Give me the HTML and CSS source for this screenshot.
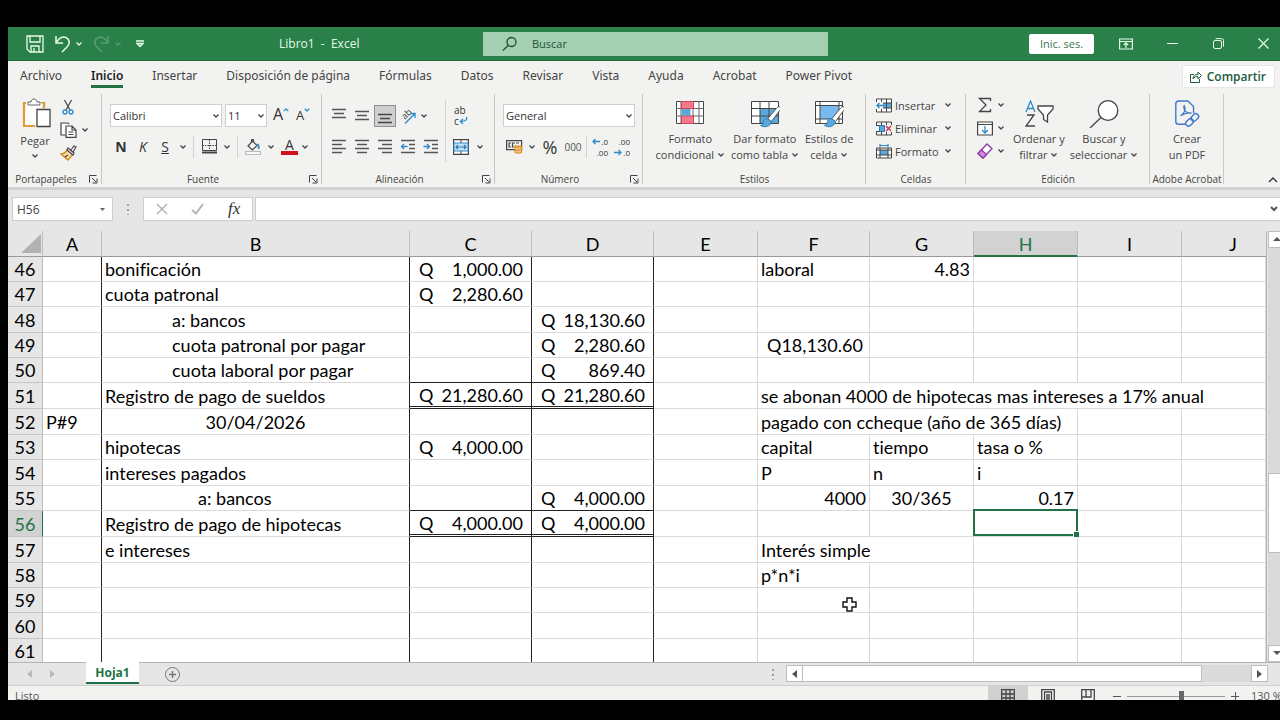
FILE: index.html
```html
<!DOCTYPE html>
<html lang="es">
<head>
<meta charset="utf-8">
<title>Libro1 - Excel</title>
<link rel="stylesheet" href="styles.css">
</head>
<body>
<svg class="defs" aria-hidden="true">
  <symbol id="chev" viewBox="0 0 8 8"><path d="M1.500 2.500 4 5l2.500-2.500" fill="none" stroke="currentColor" stroke-width="1.300"/></symbol>
  <symbol id="launch" viewBox="0 0 9 9"><path d="M.5 7.500v-7h7M3 3l4 4M8 3.500V8H3.500" fill="none" stroke="currentColor"/></symbol>
  <symbol id="brush" viewBox="0 0 24 24"><path d="M22 1c2 1 1 3 0 4l-9 12-4-3 9-11c1-1 2.500-3 4-2z" fill="#fff" stroke="#444"/><path d="M9 14c-4-1-5 3-5 5 0 2-2 2-3 2 4 3 11 2 12-4z" fill="#5ba9dc" stroke="#2878b5"/></symbol>
</svg>
<div class="app">
  <header class="titlebar">
    <div class="quick">
      <button aria-label="Guardar"><svg width="18" height="18" viewBox="0 0 18 18" fill="none" stroke="currentColor" stroke-width="1.300"><path d="M1 1h16v16H4l-3-3zM4 1v6h10V1M5 17v-6h8v6M8 13v4"/></svg></button>
      <button aria-label="Deshacer"><svg width="18" height="18" viewBox="0 0 18 18" fill="none" stroke="currentColor" stroke-width="1.500"><path d="M2 1v7h7M2 8C6 1 11 1 14 4c2 3 1 6-1 8l-5 5"/></svg><svg width="8" height="8"><use href="#chev"/></svg></button>
      <button class="dim" aria-label="Rehacer"><svg width="18" height="18" viewBox="0 0 18 18" fill="none" stroke="currentColor" stroke-width="1.500"><path d="M15 1v7H8M15 8C11 1 6 1 3 4c-2 3-1 6 1 8l5 5"/></svg><svg width="8" height="8"><use href="#chev"/></svg></button>
      <button aria-label="Personalizar"><svg width="8" height="8" viewBox="0 0 8 8" fill="none" stroke="currentColor" stroke-width="1.300"><path d="M0 1h8M1 3.500h6L4 6.500z"/></svg></button>
    </div>
    <h1 class="doc">Libro1&nbsp; -&nbsp; Excel</h1>
    <label class="search"><svg width="16" height="16" viewBox="0 0 16 16" fill="none" stroke="#1c5536" stroke-width="1.300"><circle cx="9.500" cy="6" r="4.500"/><path d="M6.300 9.200 1 14.500"/></svg><input type="text" placeholder="Buscar" aria-label="Buscar"></label>
    <div class="window">
      <button class="signin">Inic. ses.</button>
      <button aria-label="Opciones de cinta"><svg width="14" height="12" viewBox="0 0 14 12" fill="none" stroke="currentColor" stroke-width="1.200"><path d="M.6 1h12.800v10H.6zM.6 3.500h12.800M7 10V5M4.800 7 7 4.800 9.200 7"/></svg></button>
      <button aria-label="Minimizar"><svg width="11" height="11" viewBox="0 0 11 11" stroke="currentColor"><path d="M0 5.500h11"/></svg></button>
      <button aria-label="Restaurar"><svg width="11" height="11" viewBox="0 0 11 11" fill="none" stroke="currentColor"><rect x=".5" y="2.500" width="8" height="8" rx="1.500"/><path d="M2.500.6h6q2 0 2 2v6"/></svg></button>
      <button aria-label="Cerrar"><svg width="11" height="11" viewBox="0 0 11 11" stroke="currentColor" stroke-width="1.200"><path d="M.5.5l10 10M10.500.5l-10 10"/></svg></button>
    </div>
  </header>

  <nav class="tabs">
    <a href="#">Archivo</a><a href="#" class="active">Inicio</a><a href="#">Insertar</a><a href="#">Disposición de página</a><a href="#">Fórmulas</a><a href="#">Datos</a><a href="#">Revisar</a><a href="#">Vista</a><a href="#">Ayuda</a><a href="#">Acrobat</a><a href="#">Power Pivot</a>
    <button class="share"><svg width="12" height="12" viewBox="0 0 12 12" fill="none" stroke="currentColor"><path d="M4 3.500H.5v8h9V8M3 8c0-3 2-4.500 5-4.500V1l3.500 3.500L8 8V5.500C6 5.500 4 6 3 8z"/></svg>Compartir</button>
  </nav>

  <section class="ribbon">
    <div class="group g-clip">
      <div class="gbody">
        <button class="big paste"><svg width="32" height="32" viewBox="-3 0 32 32" fill="none"><path d="M4 5H2v23h11M19 5h3v5" stroke="#e29a37" stroke-width="2.200"/><path d="M4 5h16v5h-6v17H3z" fill="#fff"/><path d="M6 7V4h3c0-4 6-4 6 0h3v3z" fill="#fff" stroke="#666"/><path d="M15 11.500h13v17H15z" fill="#fff" stroke="#444" stroke-width="1.300"/></svg><span>Pegar</span><svg width="8" height="8"><use href="#chev"/></svg></button>
        <div class="stack">
          <button aria-label="Cortar"><svg width="16" height="16" viewBox="0 0 16 16" fill="none"><path d="M4.500 1l5.500 10M11.500 1 6 11" stroke="#444" stroke-width="1.200"/><circle cx="5" cy="13" r="2" stroke="#2e8bcb" stroke-width="1.300"/><circle cx="11" cy="13" r="2" stroke="#2e8bcb" stroke-width="1.300"/></svg></button>
          <button aria-label="Copiar"><svg width="17" height="16" viewBox="0 0 17 16" fill="#fff" stroke="#444" stroke-width="1.200"><path d="M6 13H1V1h7l1 1"/><path d="M6 4h6l4 4v7.400H6zM12 4v4h4M8.500 10h5M8.500 12.500h5"/></svg><svg width="8" height="8"><use href="#chev"/></svg></button>
          <button aria-label="Copiar formato"><svg width="17" height="16" viewBox="0 0 17 16"><path d="M8 4l5 5-5 6-7-6c3 0 5-2 7-5z" fill="#f8dca8" stroke="#d98a1f" stroke-width="1.400"/><path d="M5 12l3-2M7 5l6 5 1-2-6-5zM11 5l3-4 2 1-3 5" fill="#fff" stroke="#444" stroke-width="1.200"/></svg></button>
        </div>
      </div>
      <footer><span>Portapapeles</span><button aria-label="Más opciones de portapapeles"><svg width="9" height="9"><use href="#launch"/></svg></button></footer>
    </div>

    <div class="group g-font">
      <div class="gbody col">
        <div class="row">
          <span class="combo w-font"><select aria-label="Fuente"><option>Calibri</option></select><svg width="8" height="8"><use href="#chev"/></svg></span>
          <span class="combo w-size"><select aria-label="Tamaño"><option>11</option></select><svg width="8" height="8"><use href="#chev"/></svg></span>
          <button class="ic grow-a" aria-label="Aumentar fuente"><span class="a-lg">A</span><svg width="6" height="14" viewBox="0 0 6 14" fill="none" stroke="#2e8bcb" stroke-width="1.300"><path d="M.8 6 3 3.800 5.200 6"/></svg></button>
          <button class="ic grow-a" aria-label="Disminuir fuente"><span class="a-sm">A</span><svg width="6" height="14" viewBox="0 0 6 14" fill="none" stroke="#2e8bcb" stroke-width="1.300"><path d="M.8 3.800 3 6 5.200 3.800"/></svg></button>
        </div>
        <div class="row">
          <button class="ic"><b>N</b></button><button class="ic"><i>K</i></button><button class="ic"><u>S</u></button><button class="dd" aria-label="Subrayado"><svg width="8" height="8"><use href="#chev"/></svg></button>
          <span class="vr"></span>
          <button class="ic" aria-label="Bordes"><svg width="15" height="15" viewBox="0 0 15 15" fill="none" stroke="#444"><path d="M.5 6.500h14M7.500 1v11" stroke-dasharray="1.500 1"/><path d="M0 13.500h15" stroke-width="2"/><path d="M.5 .5h14v11H.5z"/></svg></button><button class="dd" aria-label="Tipos de borde"><svg width="8" height="8"><use href="#chev"/></svg></button>
          <span class="vr"></span>
          <button class="ic" aria-label="Relleno"><svg width="16" height="16" viewBox="0 0 16 16" fill="none" stroke="#444" stroke-width="1.200"><path d="M6.500 4V1q1.500-1.500 2 0v3M7.500 2 12 6.500 7.500 11 3 7z"/><path d="M12 5c2 1 2 3 1.500 5" stroke="#2e8bcb" stroke-width="1.800"/><rect x=".5" y="12.500" width="15" height="3" fill="#fff" stroke="#bbb"/></svg></button><button class="dd" aria-label="Colores de relleno"><svg width="8" height="8"><use href="#chev"/></svg></button>
          <button class="ic fontcolor" aria-label="Color de fuente">A</button><button class="dd" aria-label="Colores de fuente"><svg width="8" height="8"><use href="#chev"/></svg></button>
        </div>
      </div>
      <footer><span>Fuente</span><button aria-label="Más opciones de fuente"><svg width="9" height="9"><use href="#launch"/></svg></button></footer>
    </div>

    <div class="group g-align">
      <div class="gbody">
        <div class="col">
          <div class="row">
            <button class="ic" aria-label="Arriba"><svg width="16" height="16" viewBox="0 0 16 16" stroke="#555" stroke-width="1.300"><path d="M1 1.500h14M3 5.500h10M1 9.500h14"/></svg></button>
            <button class="ic" aria-label="Medio"><svg width="16" height="16" viewBox="0 0 16 16" stroke="#555" stroke-width="1.300"><path d="M1 3.500h14M3 7.500h10M1 11.500h14"/></svg></button>
            <button class="ic on" aria-label="Abajo"><svg width="16" height="16" viewBox="0 0 16 16" stroke="#444" stroke-width="1.300"><path d="M1 6.500h14M3 10.500h10M1 14.500h14"/></svg></button>
            <button class="ic" aria-label="Orientación"><svg width="22" height="22" viewBox="0 0 22 22" fill="none"><text x="8" y="15" transform="rotate(-45 8 15)" font-size="9" fill="#444">ab</text><path d="M8 18.500 18 8.500M13.500 8.500H18V13" stroke="#2e8bcb" stroke-width="1.300"/></svg></button>
            <button class="dd tight" aria-label="Ángulos"><svg width="8" height="8"><use href="#chev"/></svg></button>
          </div>
          <div class="row">
            <button class="ic" aria-label="Izquierda"><svg width="16" height="16" viewBox="0 0 16 16" stroke="#555" stroke-width="1.300"><path d="M1 1.500h14M1 5.500h10M1 9.500h14M1 13.500h10"/></svg></button>
            <button class="ic" aria-label="Centro"><svg width="16" height="16" viewBox="0 0 16 16" stroke="#555" stroke-width="1.300"><path d="M1 1.500h14M3 5.500h10M1 9.500h14M3 13.500h10"/></svg></button>
            <button class="ic" aria-label="Derecha"><svg width="16" height="16" viewBox="0 0 16 16" stroke="#555" stroke-width="1.300"><path d="M1 1.500h14M5 5.500h10M1 9.500h14M5 13.500h10"/></svg></button>
            <button class="ic" aria-label="Disminuir sangría"><svg width="16" height="16" viewBox="0 0 16 16" fill="none" stroke="#555" stroke-width="1.300"><path d="M1 1.500h14M9 5.500h6M9 9.500h6M1 13.500h14"/><path d="M7.500 7.500H1.500M4 5 1.500 7.500 4 10" stroke="#2e8bcb"/></svg></button>
            <button class="ic" aria-label="Aumentar sangría"><svg width="16" height="16" viewBox="0 0 16 16" fill="none" stroke="#555" stroke-width="1.300"><path d="M1 1.500h14M9 5.500h6M9 9.500h6M1 13.500h14"/><path d="M.5 7.500h6M4 5l2.500 2.500L4 10" stroke="#2e8bcb"/></svg></button>
          </div>
        </div>
        <span class="vr tall"></span>
        <div class="col">
          <div class="row"><button class="ic wrap" aria-label="Ajustar texto"><span>ab</span><span>c<svg width="9" height="8" viewBox="0 0 9 8" fill="none" stroke="#2e8bcb" stroke-width="1.300"><path d="M7.500 0c1 3.500-2 4.500-6 4.500M4 2 1.300 4.500 4 7"/></svg></span></button></div>
          <div class="row"><button class="ic" aria-label="Combinar"><svg width="16" height="16" viewBox="0 0 16 16" fill="none"><path d="M.6.600h14.800v14.800H.6z" fill="#fff" stroke="#444" stroke-width="1.200"/><path d="M1 4h14v8H1z" fill="#c5e3f5" stroke="#2e8bcb"/><path d="M8 1v3M8 12v3" stroke="#444"/><path d="M3 8h10M5 6 3 8l2 2M11 6l2 2-2 2" stroke="#2878b5" stroke-width="1.200"/></svg></button><button class="dd" aria-label="Opciones de combinar"><svg width="8" height="8"><use href="#chev"/></svg></button></div>
        </div>
      </div>
      <footer><span>Alineación</span><button aria-label="Más opciones de alineación"><svg width="9" height="9"><use href="#launch"/></svg></button></footer>
    </div>

    <div class="group g-num">
      <div class="gbody col">
        <div class="row"><span class="combo w-num"><select aria-label="Formato de número"><option>General</option></select><svg width="8" height="8"><use href="#chev"/></svg></span></div>
        <div class="row">
          <button class="ic" aria-label="Moneda"><svg width="17" height="15" viewBox="0 0 17 15" fill="none" stroke="#444" stroke-width="1.200"><path d="M.6 1.600h15v9H.6z"/><path d="M5 4H3v4h2M9 4H6.500v4H8M10 4h3"/><path d="M9 7v6c0 1.500 6.500 1.500 6.500 0V7z" fill="#f6c78a" stroke="#dd8a20"/><path d="M9 7c0 1.500 6.500 1.500 6.500 0M9 10c0 1.500 6.500 1.500 6.500 0" stroke="#dd8a20"/></svg></button><button class="dd" aria-label="Monedas"><svg width="8" height="8"><use href="#chev"/></svg></button>
          <button class="ic pct">%</button><button class="ic zeros">000</button>
          <span class="vr"></span>
          <button class="ic dec" aria-label="Aumentar decimales"><span><svg width="8" height="7" viewBox="0 0 8 7" fill="none" stroke="#2e8bcb" stroke-width="1.300"><path d="M8 3.500H1M3.500 1 1 3.500 3.500 6"/></svg>.0</span><span>.00</span></button>
          <button class="ic dec" aria-label="Disminuir decimales"><span>.00</span><span><svg width="8" height="7" viewBox="0 0 8 7" fill="none" stroke="#2e8bcb" stroke-width="1.300"><path d="M0 3.500h7M4.500 1 7 3.500 4.500 6"/></svg>.0</span></button>
        </div>
      </div>
      <footer><span>Número</span><button aria-label="Más opciones de número"><svg width="9" height="9"><use href="#launch"/></svg></button></footer>
    </div>

    <div class="group g-styles">
      <div class="gbody">
        <button class="big"><svg width="30" height="28" viewBox="0 0 30 28" fill="none"><path d="M1.500 1.500h27v22h-27z" fill="#fff" stroke="#444"/><path d="M6 1v22M24 1v22M1 8.500h28M1 16h28M12 1v22M18 1v22" stroke="#666"/><path d="M6.500 1.500h12v7h-12zM6.500 16h12v7.500h-12z" fill="#f47a8a" stroke="#d3455a"/><path d="M6.500 9h9v6.500h-9z" fill="#5ba9dc"/></svg><span>Formato<br>condicional <svg width="8" height="8"><use href="#chev"/></svg></span></button>
        <button class="big"><svg width="30" height="28" viewBox="0 0 30 28" fill="none"><path d="M1.500 1.500h27v22h-27z" fill="#fff" stroke="#444"/><path d="M10 9h18v14H10z" fill="#5ba9dc"/><path d="M10 1v22M19 1v22M1 8.500h28M1 16h28" stroke="#444"/><use href="#brush" x="9" y="6" width="23" height="22"/></svg><span>Dar formato<br>como tabla <svg width="8" height="8"><use href="#chev"/></svg></span></button>
        <button class="big"><svg width="30" height="28" viewBox="0 0 30 28" fill="none"><path d="M1.500 1.500h27v22h-27z" fill="#fff" stroke="#444"/><path d="M6 6h19v13H6z" fill="#78baf0"/><path d="M6 1v22M25 1v22M1 5.500h28M1 19h28" stroke="#444"/><use href="#brush" x="9" y="6" width="23" height="22"/></svg><span>Estilos de<br>celda <svg width="8" height="8"><use href="#chev"/></svg></span></button>
      </div>
      <footer><span>Estilos</span></footer>
    </div>

    <div class="group g-cells">
      <div class="gbody stack">
        <button><svg width="16" height="15" viewBox="0 0 16 15" fill="none"><path d="M.5 1h15v13H.5z" fill="#fff" stroke="#444"/><path d="M6 5h9v5H6z" fill="#5ba9dc"/><path d="M.5 5h15M.5 10h15M5.500 1v13M10.500 1v13" stroke="#444"/><path d="M0 4h7v7H0z" fill="#f3f3f1"/><path d="M8 7.500H1M3.500 5 1 7.500 3.500 10" stroke="#2e8bcb" stroke-width="1.300"/></svg><span>Insertar</span><svg width="8" height="8"><use href="#chev"/></svg></button>
        <button><svg width="16" height="15" viewBox="0 0 16 15" fill="none"><path d="M.5 4V1h15v3M.5 11v3h15v-3M5.500 1v3M10.500 1v3M5.500 11v3M10.500 11v3M0 4.500h5M0 10.500h5" stroke="#444"/><path d="M3.500 4.500h5v6h-5z" fill="#5ba9dc" stroke="#2878b5"/><path d="M10 5l5 5M15 5l-5 5" stroke="#d3304a" stroke-width="1.400"/></svg><span>Eliminar</span><svg width="8" height="8"><use href="#chev"/></svg></button>
        <button><svg width="16" height="16" viewBox="0 0 16 16" fill="none"><path d="M4 1v3M12 1v3M4 2.500h8" stroke="#2e8bcb" stroke-width="1.200"/><path d="M.5 5h15v10H.5z" fill="#fff" stroke="#444"/><path d="M4 7h8v5H4z" fill="#5ba9dc"/><path d="M4 5v10M12 5v10M0 7h16M0 12h16" stroke="#444"/></svg><span>Formato</span><svg width="8" height="8"><use href="#chev"/></svg></button>
      </div>
      <footer><span>Celdas</span></footer>
    </div>

    <div class="group g-edit">
      <div class="gbody">
        <div class="stack">
          <button aria-label="Autosuma"><svg width="16" height="16" viewBox="0 0 16 16" fill="none" stroke="#444" stroke-width="1.300"><path d="M13.500 4V1.500h-11L9 8l-6.500 6.500h11V12"/></svg><svg width="8" height="8"><use href="#chev"/></svg></button>
          <button aria-label="Rellenar"><svg width="16" height="15" viewBox="0 0 16 15" fill="none"><path d="M.6 1h14.800v13H.6zM.6 3.500h14.800" fill="#fff" stroke="#444" stroke-width="1.200"/><path d="M8 5v7M5 9l3 3 3-3" stroke="#2e8bcb" stroke-width="1.300"/></svg><svg width="8" height="8"><use href="#chev"/></svg></button>
          <button aria-label="Borrar"><svg width="16" height="16" viewBox="0 0 16 16" stroke="#8e3aa5" stroke-width="1.300"><path d="M1 10.500 10 1l5 4.500L6 15z" fill="#fff"/><path d="M1 10.500 4.500 7l5 4.500L6 15z" fill="#d58be0"/></svg><svg width="8" height="8"><use href="#chev"/></svg></button>
        </div>
        <button class="big"><svg width="30" height="28" viewBox="0 0 30 28" fill="none" stroke-width="1.300"><path d="M2 12 6.500 1 11 12M3.500 8.500h6" stroke="#2e8bcb"/><path d="M3 15h7l-8 11h9" stroke="#444"/><path d="M14 6h15v3l-5.500 6v7l-4-2.500V15L14 9z" fill="#fff" stroke="#444"/></svg><span>Ordenar y<br>filtrar <svg width="8" height="8"><use href="#chev"/></svg></span></button>
        <button class="big"><svg width="30" height="28" viewBox="0 0 30 28" fill="none" stroke="#444" stroke-width="1.300"><circle cx="19" cy="10.500" r="9.800" fill="#fff"/><path d="M12 17.500 1 28"/></svg><span>Buscar y<br>seleccionar <svg width="8" height="8"><use href="#chev"/></svg></span></button>
      </div>
      <footer><span>Edición</span></footer>
    </div>

    <div class="group g-pdf">
      <div class="gbody">
        <button class="big"><svg width="28" height="28" viewBox="0 0 28 30" fill="none" stroke="#3e78cc" stroke-width="1.500"><path d="M12 26H5q-3 0-3-3V4q0-3 3-3h10l6 6v7"/><path d="M7 17c5-3 6-8 4-11-2 4 3 9 8 8-5-1-9 1-12 3z" stroke-width="1.200"/><rect x="18" y="16" width="9" height="6" rx="3" transform="rotate(-45 22 19)"/><rect x="12" y="21.500" width="9" height="6" rx="3" transform="rotate(-45 16 24)"/></svg><span>Crear<br>un PDF</span></button>
      </div>
      <footer><span>Adobe Acrobat</span></footer>
    </div>
    <button class="collapse" aria-label="Contraer cinta"><svg width="10" height="6" viewBox="0 0 10 6" fill="none" stroke="#333" stroke-width="1.300"><path d="M1 5l4-4 4 4"/></svg></button>
  </section>

  <section class="formula">
    <label class="namebox"><input type="text" value="H56" aria-label="Cuadro de nombres"><svg width="5" height="3"><path d="M0 0h5L2.500 3z" fill="#666"/></svg></label>
    <span class="grip"></span>
    <div class="fx">
      <button aria-label="Cancelar"><svg width="12" height="12" viewBox="0 0 12 12" stroke="#b4b4b4" stroke-width="1.500"><path d="M1 1l10 10M11 1 1 11"/></svg></button>
      <button aria-label="Introducir"><svg width="13" height="12" viewBox="0 0 13 12" fill="none" stroke="#b4b4b4" stroke-width="2"><path d="M1 7l4 3.500L12 1"/></svg></button>
      <button class="fn">fx</button>
    </div>
    <label class="fbar"><input type="text" aria-label="Barra de fórmulas"><svg width="8" height="6" viewBox="0 0 8 6" fill="none" stroke="#555" stroke-width="2"><path d="M1 1l3 3 3-3"/></svg></label>
  </section>

  <main class="sheet">
    <div class="gridwrap">
    <table class="grid">
      <colgroup><col class="c-row"><col class="c-a"><col class="c-b"><col class="c-c"><col class="c-c"><col class="c-e"><col class="c-f"><col class="c-e"><col class="c-e"><col class="c-e"><col></colgroup>
      <thead><tr class="t"><th class="corner"><svg width="20" height="19"><path d="M20 0v19H0z" fill="#b2b2b2"/></svg></th><th>A</th><th>B</th><th>C</th><th>D</th><th>E</th><th>F</th><th>G</th><th class="sel">H</th><th>I</th><th class="last">J</th></tr></thead>
      <tbody>
        <tr><th>46</th><td class="k"></td><td class="k">bonificación</td><td class="k"><div class="acc"><span>Q</span><span>1,000.00</span></div></td><td class="k"></td><td></td><td>laboral</td><td class="r">4.83</td><td></td><td></td><td></td></tr>
        <tr><th>47</th><td class="k"></td><td class="k">cuota patronal</td><td class="k"><div class="acc"><span>Q</span><span>2,280.60</span></div></td><td class="k"></td><td></td><td></td><td></td><td></td><td></td><td></td></tr>
        <tr class="t"><th>48</th><td class="k"></td><td class="k in1">a: bancos</td><td class="k"></td><td class="k"><div class="acc"><span>Q</span><span>18,130.60</span></div></td><td></td><td></td><td></td><td></td><td></td><td></td></tr>
        <tr><th>49</th><td class="k"></td><td class="k in1">cuota patronal por pagar</td><td class="k"></td><td class="k"><div class="acc"><span>Q</span><span>2,280.60</span></div></td><td></td><td class="cur">Q18,130.60</td><td></td><td></td><td></td><td></td></tr>
        <tr><th>50</th><td class="k"></td><td class="k in1">cuota laboral por pagar</td><td class="k bb"></td><td class="k bb"><div class="acc"><span>Q</span><span>869.40</span></div></td><td></td><td></td><td></td><td></td><td></td><td></td></tr>
        <tr class="t"><th>51</th><td class="k"></td><td class="k">Registro de pago de sueldos</td><td class="k dbl"><div class="acc"><span>Q</span><span>21,280.60</span></div></td><td class="k dbl"><div class="acc"><span>Q</span><span>21,280.60</span></div></td><td></td><td colspan="5">se abonan 4000 de hipotecas mas intereses a 17% anual</td></tr>
        <tr class="t"><th>52</th><td class="k">P#9</td><td class="k c">30/04/2026</td><td class="k"></td><td class="k"></td><td></td><td colspan="3">pagado con ccheque (año de 365 días)</td><td></td><td></td></tr>
        <tr><th>53</th><td class="k"></td><td class="k">hipotecas</td><td class="k"><div class="acc"><span>Q</span><span>4,000.00</span></div></td><td class="k"></td><td></td><td>capital</td><td>tiempo</td><td>tasa o %</td><td></td><td></td></tr>
        <tr class="t"><th>54</th><td class="k"></td><td class="k">intereses pagados</td><td class="k"></td><td class="k"></td><td></td><td>P</td><td>n</td><td>i</td><td></td><td></td></tr>
        <tr><th>55</th><td class="k"></td><td class="k in2">a: bancos</td><td class="k bb"></td><td class="k bb"><div class="acc"><span>Q</span><span>4,000.00</span></div></td><td></td><td class="r">4000</td><td class="c">30/365</td><td class="r">0.17</td><td></td><td></td></tr>
        <tr class="t"><th class="rowsel">56</th><td class="k"></td><td class="k">Registro de pago de hipotecas</td><td class="k dbl"><div class="acc"><span>Q</span><span>4,000.00</span></div></td><td class="k dbl"><div class="acc"><span>Q</span><span>4,000.00</span></div></td><td></td><td></td><td></td><td class="active-cell"></td><td></td><td></td></tr>
        <tr class="t"><th>57</th><td class="k"></td><td class="k">e intereses</td><td class="k"></td><td class="k"></td><td></td><td colspan="2">Interés simple</td><td></td><td></td><td></td></tr>
        <tr><th>58</th><td class="k"></td><td class="k"></td><td class="k"></td><td class="k"></td><td></td><td>p*n*i</td><td></td><td></td><td></td><td></td></tr>
        <tr><th>59</th><td class="k"></td><td class="k"></td><td class="k"></td><td class="k"></td><td></td><td class="host"><svg class="cursor" width="15" height="15" viewBox="0 0 15 15" fill="#fff" stroke="#111" stroke-width="1.400"><path d="M5 1h5v4h4v5h-4v4H5v-4H1V5h4z"/></svg></td><td></td><td></td><td></td><td></td></tr>
        <tr class="t"><th>60</th><td class="k"></td><td class="k"></td><td class="k"></td><td class="k"></td><td></td><td></td><td></td><td></td><td></td><td></td></tr>
        <tr><th>61</th><td class="k"></td><td class="k"></td><td class="k"></td><td class="k"></td><td></td><td></td><td></td><td></td><td></td><td></td></tr>
      </tbody>
    </table>
    </div>
    <div class="vscroll">
      <button aria-label="Subir"><svg width="8" height="5"><path d="M0 4h8L4 0z" fill="#555"/></svg></button>
      <div class="track"><div class="thumb"></div></div>
      <button aria-label="Bajar"><svg width="8" height="5"><path d="M0 0h8L4 4z" fill="#555"/></svg></button>
    </div>
  </main>

  <div class="sheettabs">
    <div class="arrows"><svg width="5" height="8"><path d="M5 0v8L0 4z" fill="#b8b8b8"/></svg><svg width="5" height="8"><path d="M0 0v8l5-4z" fill="#b8b8b8"/></svg></div>
    <a href="#" class="tab">Hoja1</a>
    <button class="add" aria-label="Hoja nueva"><svg width="15" height="15" viewBox="0 0 15 15" fill="none" stroke="#777"><circle cx="7.500" cy="7.500" r="7"/><path d="M4 7.500h7M7.500 4v7" stroke-width="1.400"/></svg></button>
    <span class="grip"></span>
    <div class="hscroll">
      <button aria-label="Izquierda"><svg width="5" height="8"><path d="M5 0v8L0 4z" fill="#555"/></svg></button>
      <div class="track"><div class="thumb"></div></div>
      <button aria-label="Derecha"><svg width="5" height="8"><path d="M0 0v8l5-4z" fill="#555"/></svg></button>
    </div>
  </div>

  <footer class="status">
    <span>Listo</span>
    <div class="views">
      <button class="on" aria-label="Normal"><svg width="14" height="14" viewBox="0 0 14 14" fill="none" stroke="#444" stroke-width="1.300"><path d="M.7.700h12.600v12.600H.7zM5 1v12M9 1v12M1 5h12M1 9h12"/></svg></button>
      <button aria-label="Diseño de página"><svg width="14" height="14" viewBox="0 0 14 14" fill="none" stroke="#444" stroke-width="1.300"><path d="M.7.700h12.600v12.600H.7zM3.500 3h7v11h-7zM5 6h4M5 8h4M5 10h4"/></svg></button>
      <button aria-label="Saltos de página"><svg width="14" height="14" viewBox="0 0 14 14" fill="none" stroke="#444" stroke-width="1.300"><path d="M.7.700h12.600v12.600H.7zM5 1v7h5V1M.7 8H5"/></svg></button>
    </div>
    <div class="zoom"><button aria-label="Alejar"><svg width="8" height="8" stroke="#555"><path d="M0 4.500h8"/></svg></button><input type="range" min="10" max="190" value="110" aria-label="Zoom"><button aria-label="Acercar"><svg width="8" height="8" stroke="#555"><path d="M0 4.500h8M4.500 0v8"/></svg></button><span>130 %</span></div>
  </footer>
</div>
</body>
</html>
```

FILE: styles.css
```css
* { box-sizing: border-box; }
body {
  margin: 0;
  height: 100vh;
  padding: 27px 0 20px 8px;
  background: #000;
  overflow: hidden;
  font-family: "Open Sans", "Noto Sans", sans-serif;
  font-size: 12px;
  color: #444;
}
button {
  font: inherit;
  color: inherit;
  background: none;
  border: 0;
  padding: 0;
  display: flex;
  align-items: center;
  justify-content: center;
}
input, select { font: inherit; color: inherit; border: 0; background: none; padding: 0; min-width: 0; outline: 0; }
a { color: inherit; text-decoration: none; }
svg { flex: none; display: block; }
.defs { position: absolute; width: 0; height: 0; }
.app { height: 100%; display: flex; flex-direction: column; overflow: hidden; background: #f2f3f0; }

/* Title bar */
.titlebar { flex: none; height: 34px; background: #298048; border-bottom: 1px solid #1f6b3b; color: #e8fbe9; display: flex; align-items: center; }
.quick { display: flex; gap: 10px; padding-left: 18px; width: 271px; align-items: center; }
.quick button { gap: 3px; }
.quick button:last-child { margin-left: 4px; }
.quick .dim { color: #5c9c73; }
.doc { margin: 0; font-size: 12px; font-weight: 400; width: 204px; }
.search { flex: 0 1 345px; height: 24px; background: #a4cfb1; display: flex; align-items: center; gap: 14px; padding-left: 19px; color: #1c5536; font-size: 11px; }
.search input { flex: 1; }
.search input::placeholder { color: #1c5536; opacity: 1; }
.window { margin-left: auto; display: flex; align-items: center; }
.window button { width: 46px; height: 24px; }
.window button:last-child { width: 39px; padding-left: 6px; }
.window .signin { width: 65px; height: 20px; background: #fff; color: #37764f; border-radius: 2px; margin-right: 9px; font-size: 11px; }

/* Ribbon tabs */
.tabs { flex: none; height: 31px; display: flex; align-items: center; gap: 29px; padding: 0 5px 0 12px; white-space: nowrap; }
.tabs a { height: 26px; line-height: 28px; margin-bottom: 4px; border-bottom: 3px solid transparent; font-family: "Noto Sans", sans-serif; }
.tabs .active { font-weight: 600; color: #222; border-color: #217346; }
.share { margin-left: auto; height: 23px; padding: 0 8px 0 7px; gap: 5px; background: #fff; border: 1px solid #e6e6e4; border-radius: 2px; color: #1d5c3b; font-weight: 600; }

/* Ribbon */
.ribbon { flex: none; height: 98px; display: flex; border-bottom: 3px solid #d2d2d2; font-size: 11px; }
.group { flex: none; display: flex; flex-direction: column; position: relative; padding-top: 2px; }
.group::after { content: ""; position: absolute; right: 0; top: 2px; bottom: 3px; width: 1px; background: #c8c8c6; }
.gbody { flex: 1; display: flex; }
.col { display: flex; flex-direction: column; gap: 8px; padding-top: 10px; }
.row { display: flex; align-items: center; height: 23px; }
.group footer { height: 16px; display: flex; align-items: center; justify-content: center; font-size: 10px; white-space: nowrap; position: relative; }
.group footer button { position: absolute; right: 4px; top: 4px; }
.g-clip { width: 94px; }
.g-clip footer { padding-right: 18px; }
.g-font { width: 220px; }
.g-font footer, .g-align footer, .g-num footer { padding-right: 18px; }
.g-align { width: 173px; }
.g-num { width: 148px; }
.g-styles { width: 223px; }
.g-cells { width: 100px; }
.g-edit { width: 184px; }
.g-pdf { width: 74px; }
.g-font .gbody, .g-num .gbody { padding-left: 8px; }
.g-align .gbody { padding-left: 6px; }
.g-align .ic { margin-right: 1px; }
.ic { width: 22px; height: 22px; flex: none; font-size: 14px; color: #333; }
.ic.on { background: #cfcfcf; border: 1px solid #8f8f8f; }
.dd { width: 13px; height: 22px; flex: none; }
.dd.tight { width: 8px; }
.vr { width: 1px; height: 22px; background: #d0d0ce; margin: 0 4px; flex: none; }
.vr.tall { height: 62px; margin: 6px 4px 0 2px; }
.combo { display: grid; align-items: center; height: 23px; background: #fff; border: 1px solid #cfcfcf; margin-right: 3px; }
.combo > * { grid-area: 1 / 1; }
.combo > svg { justify-self: end; margin-right: 1px; }
.combo select { appearance: none; height: 21px; width: 100%; padding-left: 2px; color: #333; }
.w-font { width: 112px; }
.w-size { width: 42px; }
.w-num { width: 132px; margin-right: 0; }
.grow-a { align-items: flex-start; }
.a-lg { font-size: 16px; line-height: 18px; }
.a-sm { font-size: 13px; line-height: 20px; }
.fontcolor { line-height: 15px; height: 17px; border-bottom: 4px solid #d0121b; width: 17px; margin-left: 4px; }
.pct { font-size: 18px; width: 24px; }
.zeros { font-size: 10px; color: #555; }
.wrap { flex-direction: column; align-items: flex-start; font-size: 10px; line-height: 11px; padding-left: 4px; }
.wrap span { display: flex; align-items: center; }
.dec { flex-direction: column; align-items: flex-end; font-size: 8px; line-height: 11px; padding-right: 3px; }
.dec span { display: flex; align-items: center; gap: 1px; }
.g-num .vr { margin: 0 2px; }
.stack { display: flex; flex-direction: column; gap: 1px; }
.stack button { height: 22px; gap: 8px; justify-content: flex-start; }
.big { flex-direction: column; justify-content: flex-start; text-align: center; line-height: 16px; white-space: nowrap; }
.big span svg { display: inline-block; }
.paste { width: 50px; margin-left: 2px; padding-top: 4px; gap: 2px; }
.paste span { line-height: 18px; }
.g-clip .stack { padding-top: 2px; }
.g-clip .stack button { gap: 4px; }
.g-styles .gbody { justify-content: center; gap: 6px; }
.g-styles .big, .g-edit .big, .g-pdf .big { padding-top: 6px; gap: 3px; }
.g-cells .stack { padding-left: 10px; }
.g-cells .stack button { gap: 3px; }
.g-cells .stack span { width: 46px; text-align: left; }
.g-edit .gbody { gap: 5px; padding-left: 11px; }
.g-edit .stack { width: 31px; }
.g-edit .stack button { gap: 4px; }
.g-pdf .gbody { justify-content: center; }
.collapse { margin-left: auto; align-self: flex-end; padding: 0 2px 4px 0; }

/* Formula bar */
.formula { flex: none; height: 41px; background: #e6e6e6; display: flex; padding: 7px 0 10px 4px; }
.namebox, .fx, .fbar { background: #fff; border: 1px solid #cdcdcd; display: flex; align-items: center; }
.namebox { width: 101px; padding: 0 7px 0 4px; }
.namebox input, .fbar input { flex: 1; }
.grip { width: 2px; height: 11px; margin: auto 14px; background: repeating-linear-gradient(#a0a0a0 0 2px, transparent 2px 5px); }
.fx { width: 110px; margin-right: 2px; justify-content: space-around; }
.fn { font-family: "Liberation Serif", serif; font-style: italic; font-size: 17px; color: #333; }
.fbar { flex: 1; padding: 0 2px 0 6px; border-right: 0; }

/* Worksheet */
.sheet { flex: 1; min-height: 0; display: flex; background: #e6e6e6; }
.gridwrap { flex: 1; min-width: 0; overflow: hidden; background: #fff; border-right: 1px solid #b5b5b5; }
.grid { table-layout: fixed; width: 100%; border-collapse: separate; border-spacing: 0; font-family: Lato, Carlito, sans-serif; font-size: 18px; line-height: 24px; font-variant-ligatures: none; color: #000; }
.c-row { width: 35px; }
.c-a { width: 59px; }
.c-b { width: 308px; }
.c-c { width: 122px; }
.c-e { width: 104px; }
.c-f { width: 112px; }
.grid tr { height: 25px; }
.grid .t { height: 26px; }
.grid th { font-weight: 400; background: #e6e6e6; padding: 0; border-right: 1px solid #bdbdbd; border-bottom: 1px solid #c6c6c6; text-align: center; }
.grid thead th { border-bottom-color: #9a9a9a; }
.grid .corner svg { margin: 0 1px 0 auto; }
.grid thead .sel { background: #d2d2d2; color: #217346; border-bottom-color: #217346; box-shadow: inset 0 -1px #217346; }
.grid .rowsel { background: #d2d2d2; color: #217346; border-right-color: #217346; }
.grid .last { padding-left: 18px; border-right: 0; }
.grid td { padding: 0 3px; border-right: 1px solid #d9d9d9; border-bottom: 1px solid #d9d9d9; white-space: nowrap; }
.grid td.k { border-right-color: #222; }
.grid .r { text-align: right; }
.grid .c { text-align: center; }
.grid .in1 { padding-left: 70px; }
.grid .in2 { padding-left: 96px; }
.grid .cur { padding-left: 9px; }
.grid td.bb { border-bottom-color: #222; }
.grid td.dbl { border-bottom: 3px double #222; line-height: 22px; }
.acc { display: flex; justify-content: space-between; padding: 0 5px 0 6px; }
.active-cell, .host { position: relative; }
.active-cell::before { content: ""; position: absolute; inset: -2px -1px 0; border: 2px solid #217346; }
.active-cell::after { content: ""; position: absolute; right: -2px; bottom: -1px; width: 5px; height: 5px; background: #217346; border: 1px solid #fff; border-width: 1px 0 0 1px; }
.cursor { position: absolute; left: 84px; top: 9px; }

.vscroll { width: 12px; margin-left: 1px; display: flex; flex-direction: column; overflow: hidden; }
.vscroll button { height: 17px; width: 17px; background: #fff; border: 1px solid #bdbdbd; }
.vscroll .track { flex: 1; background: #dadada; padding-top: 225px; }
.vscroll .thumb { height: 80px; background: #fff; border: 1px solid #bdbdbd; border-right: 0; }

/* Sheet tabs */
.sheettabs { flex: none; height: 24px; display: flex; background: #e6e6e6; border-top: 1px solid #b5b5b5; border-bottom: 1px solid #cfcfcf; }
.arrows { width: 78px; display: flex; align-items: center; gap: 18px; padding-left: 19px; }
.tab { width: 53px; height: 22px; margin-top: -1px; text-align: center; line-height: 22px; background: #fff; border-bottom: 2px solid #217346; color: #217346; font-weight: 700; }
.add { margin-left: 26px; }
.sheettabs .grip { margin: auto 12px auto auto; }
.hscroll { width: 482px; display: flex; margin: 2px 12px 3px 0; }
.hscroll button { width: 17px; background: #fff; border: 1px solid #bdbdbd; }
.hscroll .track { flex: 1; background: #dadada; }
.hscroll .thumb { width: 89%; height: 100%; background: #fff; border: 1px solid #bdbdbd; border-left: 0; }

/* Status bar, cut off by the lower edge of the window */
.status { flex: none; height: 14px; display: flex; overflow: hidden; font-size: 11px; line-height: 20px; padding-left: 7px; color: #555; align-items: flex-start; }
.views { margin-left: auto; display: flex; }
.views button { width: 40px; height: 22px; align-items: flex-start; padding-top: 3px; }
.views .on { background: #d0d1ce; }
.zoom { display: flex; white-space: nowrap; padding-left: 5px; height: 20px; align-items: center; }
.zoom input { appearance: none; width: 98px; height: 1px; background: #999; margin: 0 6px; }
.zoom input::-webkit-slider-thumb { appearance: none; width: 5px; height: 11px; background: #666; }
.zoom span { width: 41px; padding-left: 12px; }
```
